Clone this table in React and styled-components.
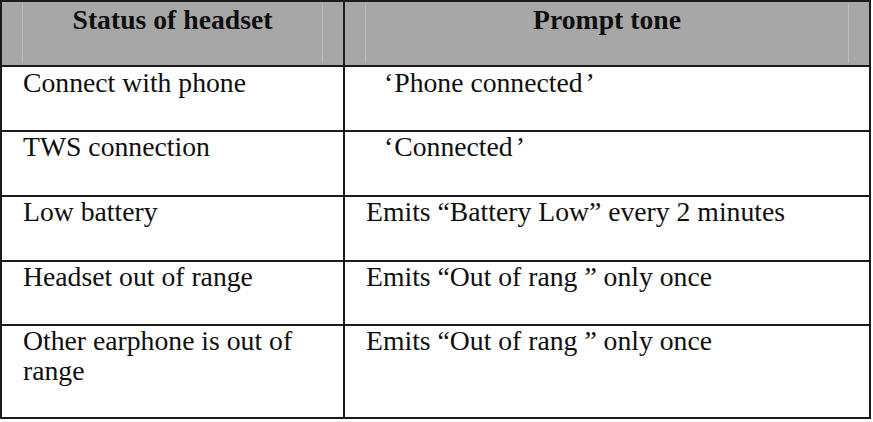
import React from "react";
import styled, { createGlobalStyle } from "styled-components";

const Global = createGlobalStyle`
  html, body { margin: 0; padding: 0; background: #ffffff; }
  body { font-family: "Liberation Serif", "Times New Roman", serif; }
`;

const Table = styled.div`
  display: grid;
  grid-template-columns: 341px 524px;
  grid-template-rows: 63px 63px 63px 63px 62px 91px;
  gap: 2px;
  padding: 2px;
  width: 871px;
  box-sizing: border-box;
  background: #1b1b1b;
  font-family: "Liberation Serif", "Times New Roman", serif;
  color: #0f0f0f;
`;

const HeadCell = styled.div`
  background: #a7a7a7;
  padding: 0 20px;
  display: flex;
`;

const HeadInner = styled.div`
  flex: 1;
  margin: 2px 0;
  border-left: 1px solid #bdbdbd;
  border-right: 1px solid #bdbdbd;
  text-align: center;
  font-weight: bold;
  font-size: 27.7px;
  line-height: 30px;
  padding-top: 1px;
  color: #0f0f0f;
`;

const Cell = styled.div`
  background: #ffffff;
  padding: ${(p) => p.$top ?? 0}px 12px 0 21px;
  font-size: 27.7px;
  line-height: 30px;
  overflow: hidden;
`;

const OpenQuote = styled.span`
  margin-left: 18px;
  margin-right: 1px;
`;

const CloseQuote = styled.span`
  margin-left: 3px;
`;

const rows = [
  { a: "Connect with phone", b: <><OpenQuote>‘</OpenQuote>Phone connected<CloseQuote>’</CloseQuote></>, top: 1 },
  { a: "TWS connection", b: <><OpenQuote>‘</OpenQuote>Connected<CloseQuote>’</CloseQuote></>, top: 0 },
  { a: "Low battery", b: "Emits “Battery Low” every 2 minutes", top: 0 },
  { a: "Headset out of range", b: "Emits “Out of rang ” only once", top: 0 },
  { a: "Other earphone is out of range", b: "Emits “Out of rang ” only once", top: 0 },
];

export default function App() {
  return (
    <>
      <Global />
      <Table>
        <HeadCell><HeadInner>Status of headset</HeadInner></HeadCell>
        <HeadCell><HeadInner>Prompt tone</HeadInner></HeadCell>
        {rows.map((r, i) => (
          <React.Fragment key={i}>
            <Cell $top={r.top}>{r.a}</Cell>
            <Cell $top={r.top}>{r.b}</Cell>
          </React.Fragment>
        ))}
      </Table>
    </>
  );
}
